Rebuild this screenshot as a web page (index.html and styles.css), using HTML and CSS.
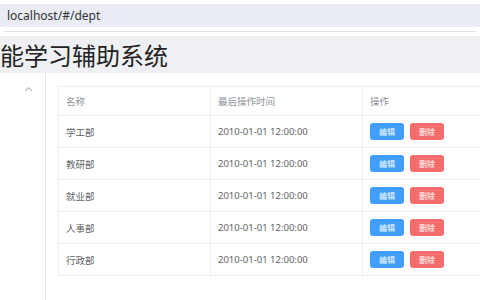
FILE: index.html
```html
<!DOCTYPE html>
<html>
<head>
  <title>部门管理</title>
  <link rel="stylesheet" href="styles.css">
</head>
<body>
  <div id="addressBar">localhost/#/dept</div>
  <div id="header">
    <h1 id="title">智能学习辅助系统</h1>
  </div>
  <div id="main">
    <div id="aside">
      <span class="chevron"></span>
    </div>
    <div id="content">
      <table class="dept-table">
        <thead>
          <tr>
            <th class="col-name">名称</th>
            <th class="col-time">最后操作时间</th>
            <th class="col-ops">操作</th>
          </tr>
        </thead>
        <tbody>
          <tr>
            <td>学工部</td>
            <td>2010-01-01 12:00:00</td>
            <td><button class="btn btn-edit">编辑</button><button class="btn btn-del">删除</button></td>
          </tr>
          <tr>
            <td>教研部</td>
            <td>2010-01-01 12:00:00</td>
            <td><button class="btn btn-edit">编辑</button><button class="btn btn-del">删除</button></td>
          </tr>
          <tr>
            <td>就业部</td>
            <td>2010-01-01 12:00:00</td>
            <td><button class="btn btn-edit">编辑</button><button class="btn btn-del">删除</button></td>
          </tr>
          <tr>
            <td>人事部</td>
            <td>2010-01-01 12:00:00</td>
            <td><button class="btn btn-edit">编辑</button><button class="btn btn-del">删除</button></td>
          </tr>
          <tr>
            <td>行政部</td>
            <td>2010-01-01 12:00:00</td>
            <td><button class="btn btn-edit">编辑</button><button class="btn btn-del">删除</button></td>
          </tr>
        </tbody>
      </table>
    </div>
  </div>
</body>
</html>
```

FILE: styles.css
```css
html, body {
  margin: 0;
  padding: 0;
  height: 100%;
  overflow: hidden;
  background: #fff;
  font-family: "Noto Sans", "Noto Sans CJK SC", sans-serif;
}

#addressBar {
  margin-top: 4px;
  height: 23px;
  line-height: 23px;
  padding-left: 7px;
  background-color: #e9ebf5;
  color: #333;
  font-size: 12px;
  border-bottom: 4px solid #fff;
  box-shadow: 0 5px 0 -4px #e2e2e2;
}

#header {
  margin-top: 5px;
  height: 37px;
  background-color: #eef0f3;
  display: flex;
  align-items: center;
}

#title {
  margin: 0;
  font-size: 24px;
  font-weight: normal;
  color: #222;
  text-indent: -24px;
  white-space: nowrap;
}

#main {
  display: flex;
  height: 227px;
}

#aside {
  width: 45px;
  flex: none;
  border-right: 1px solid #e6e6e6;
  position: relative;
}

.chevron {
  position: absolute;
  left: 26px;
  top: 15px;
  width: 4px;
  height: 4px;
  border-left: 1px solid #b0b0b0;
  border-top: 1px solid #b0b0b0;
  transform: rotate(45deg);
}

#content {
  padding: 13px 0 0 12px;
}

.dept-table {
  border-collapse: collapse;
  width: 480px;
  font-size: 9.5px;
  color: #606266;
  table-layout: fixed;
}

.dept-table th,
.dept-table td {
  border: 1px solid #ebeef5;
  text-align: left;
  padding: 0 7px;
}

.dept-table th {
  height: 28px;
  font-weight: normal;
  color: #909399;
}

.dept-table td {
  height: 31px;
}

.col-name,
.col-time {
  width: 137px;
}

.btn {
  border: none;
  border-radius: 3px;
  color: #fff;
  font-family: inherit;
  font-size: 8px;
  width: 34px;
  height: 17px;
  padding: 0;
  margin-right: 6px;
  vertical-align: middle;
}

.btn-edit {
  background-color: #409eff;
}

.btn-del {
  background-color: #f56c6c;
}
```
